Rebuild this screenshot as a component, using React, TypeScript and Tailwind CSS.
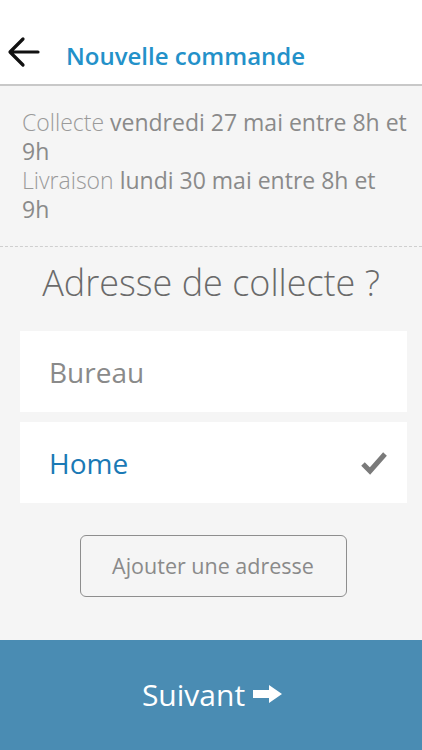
import React from 'react';

const addresses = [
  { id: 'bureau', label: 'Bureau', selected: false },
  { id: 'home', label: 'Home', selected: true },
];

const App: React.FC = () => {
  return (
    <div
      className="flex flex-col h-[750px] w-full bg-[#f5f5f5]"
      style={{ fontFamily: '"Open Sans", "Noto Sans", sans-serif' }}
    >
      {/* Header */}
      <div className="h-[86px] bg-white border-b-2 border-[#c8c8c8] flex items-end pb-[12px]">
        <svg width="34" height="32" viewBox="0 0 34 32" className="ml-[7px] mb-[4px]">
          <path d="M31 16H4M16 3L3 16l13 13" fill="none" stroke="#111" strokeWidth="3.2" strokeLinecap="round" strokeLinejoin="round" />
        </svg>
        <h1 className="ml-[25px] text-[24px] font-semibold text-[#2391c9] leading-[32px]">Nouvelle commande</h1>
      </div>

      {/* Schedule */}
      <div className="pl-[22px] pr-[14px] pt-[22px] pb-[22px] border-b border-dashed border-[#cfcfcf] text-[23px] leading-[29px] text-[#8a8a8a]">
        <p>
          <span className="font-light text-[#9a9a9a]">Collecte</span> vendredi 27 mai entre 8h et 9h
        </p>
        <p>
          <span className="font-light text-[#9a9a9a]">Livraison</span> lundi 30 mai entre 8h et 9h
        </p>
      </div>

      {/* Content */}
      <div className="flex-1 flex flex-col items-center pt-[14px]">
        <h2 className="text-[36px] font-light text-[#6a6a6a] leading-[44px]">Adresse de collecte ?</h2>
        <div className="w-full pl-[20px] pr-[15px] mt-[26px] flex flex-col gap-[10px]">
          {addresses.map((a) => (
            <div key={a.id} className="h-[81px] bg-white flex items-center justify-between pl-[29px] pr-[19px]">
              <span className={`text-[28px] ${a.selected ? 'text-[#1a79b5]' : 'text-[#8a8a8a]'}`}>{a.label}</span>
              {a.selected && (
                <svg width="28" height="26" viewBox="0 0 28 26">
                  <path d="M3 14l7 7L25 4" fill="none" stroke="#7a7a7a" strokeWidth="5" strokeLinejoin="miter" />
                </svg>
              )}
            </div>
          ))}
        </div>
        <button className="mt-[32px] w-[267px] h-[62px] border border-[#8e8e8e] rounded-[6px] text-[21.5px] text-[#8a8a8a] ml-[4px]">
          Ajouter une adresse
        </button>
      </div>

      {/* Footer */}
      <div className="h-[110px] bg-[#4a8cb3] flex items-center justify-center gap-[8px] pl-[2px]">
        <span className="text-[30px] text-white leading-[40px]">Suivant</span>
        <svg width="29" height="18" viewBox="0 0 29 18" className="mt-[-2px]">
          <path d="M0 5h16V0l13 9-13 9v-5H0z" fill="#fff" />
        </svg>
      </div>
    </div>
  );
};

export default App;
